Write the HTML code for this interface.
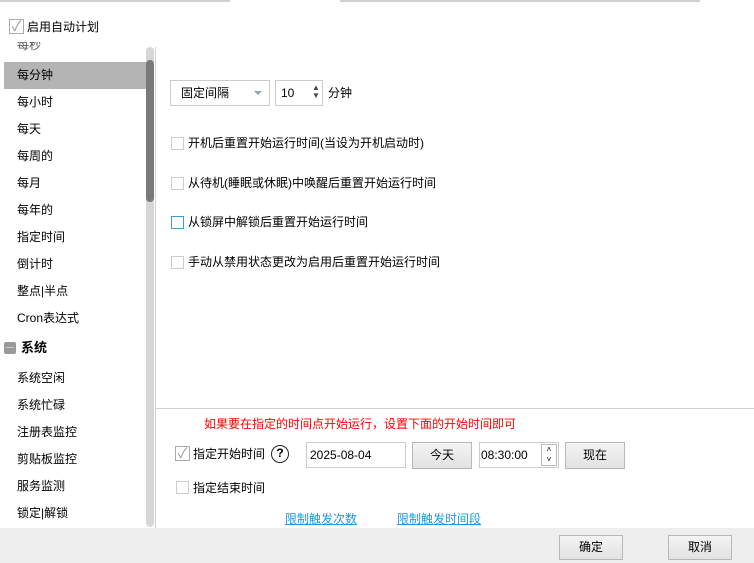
<!DOCTYPE html>
<html><head><meta charset="utf-8"><style>
*{margin:0;padding:0;box-sizing:border-box}
body{width:754px;height:563px;position:relative;background:#fff;font-family:"Liberation Sans","Noto Sans CJK SC",sans-serif;font-size:12px;color:#000;overflow:hidden}
.a{position:absolute}
.item{position:absolute;left:17px;font-size:12px;line-height:14px}
.cb{position:absolute;width:13px;height:13px;border:1px solid #ccc;background:#fff}
.t{position:absolute;font-size:12px;line-height:14px;white-space:nowrap}
.btn{position:absolute;border:1px solid #b8b8b8;background:linear-gradient(#f4f4f4,#e2e2e2);text-align:center;font-size:12px}
.inp{position:absolute;border:1px solid #ccc;background:#fff}
</style></head><body>
<div class="a" style="left:0;top:0;width:230px;height:2px;background:#d0d0d0"></div>
<div class="a" style="left:340px;top:0;width:360px;height:2px;background:#d0d0d0"></div>
<div class="cb" style="left:9px;top:19px;width:15px;height:15px;border-color:#aaa;color:#999;font-size:14px;line-height:13px;text-align:center">✓</div>
<div class="t" style="left:27px;top:20px">启用自动计划</div>
<div class="item" style="top:42px;color:#555;height:9px;overflow:hidden;line-height:6px">每秒</div>
<div class="a" style="left:4px;top:62px;width:142px;height:27px;background:#b4b4b4"></div>
<div class="item" style="top:68px">每分钟</div>
<div class="item" style="top:95px">每小时</div>
<div class="item" style="top:122px">每天</div>
<div class="item" style="top:149px">每周的</div>
<div class="item" style="top:176px">每月</div>
<div class="item" style="top:203px">每年的</div>
<div class="item" style="top:230px">指定时间</div>
<div class="item" style="top:257px">倒计时</div>
<div class="item" style="top:284px">整点|半点</div>
<div class="item" style="top:311px">Cron表达式</div>
<div class="a" style="left:4px;top:342px;width:12px;height:12px;background:#999;border-radius:2px"><div class="a" style="left:2px;top:5px;width:8px;height:1px;background:#ccc"></div></div>
<div class="t" style="left:21px;top:341px;font-weight:bold;font-size:13px">系统</div>
<div class="item" style="top:371px">系统空闲</div>
<div class="item" style="top:398px">系统忙碌</div>
<div class="item" style="top:425px">注册表监控</div>
<div class="item" style="top:452px">剪贴板监控</div>
<div class="item" style="top:479px">服务监测</div>
<div class="item" style="top:506px">锁定|解锁</div>
<div class="a" style="left:146px;top:47px;width:8px;height:480px;background:#d6d6d6;border-radius:4px"></div>
<div class="a" style="left:146px;top:60px;width:8px;height:142px;background:#7a7a7a;border-radius:4px"></div>
<div class="a" style="left:155px;top:47px;width:1px;height:481px;background:#d0d0d0"></div>
<div class="inp" style="left:170px;top:80px;width:100px;height:26px"></div>
<div class="t" style="left:181px;top:86px">固定间隔</div>
<div class="a" style="left:254px;top:91px;width:0;height:0;border-left:4px solid transparent;border-right:4px solid transparent;border-top:4px solid #8aa"></div>
<div class="inp" style="left:275px;top:80px;width:48px;height:26px"></div>
<div class="t" style="left:281px;top:86px">10</div>
<div class="a" style="left:312px;top:84px;font-size:8px;line-height:8px;color:#444">▲<br>▼</div>
<div class="t" style="left:328px;top:86px">分钟</div>
<div class="cb" style="left:171px;top:137px"></div><div class="t" style="left:188px;top:136px">开机后重置开始运行时间(当设为开机启动时)</div>
<div class="cb" style="left:171px;top:177px"></div><div class="t" style="left:188px;top:176px">从待机(睡眠或休眠)中唤醒后重置开始运行时间</div>
<div class="cb" style="left:171px;top:216px;border-color:#3c9ad8"></div><div class="t" style="left:188px;top:215px">从锁屏中解锁后重置开始运行时间</div>
<div class="cb" style="left:171px;top:256px"></div><div class="t" style="left:188px;top:255px">手动从禁用状态更改为启用后重置开始运行时间</div>
<div class="a" style="left:155px;top:408px;width:599px;height:1px;background:#d0d0d0"></div>
<div class="t" style="left:204px;top:417px;color:#f00">如果要在指定的时间点开始运行，设置下面的开始时间即可</div>
<div class="cb" style="left:175px;top:446px;width:15px;height:15px;border-color:#aaa;color:#999;font-size:14px;line-height:13px;text-align:center">✓</div>
<div class="t" style="left:193px;top:447px">指定开始时间</div>
<div class="a" style="left:271px;top:445px;width:18px;height:18px;border:1.5px solid #222;border-radius:50%;text-align:center;font-weight:bold;font-size:12px;line-height:15px">?</div>
<div class="inp" style="left:306px;top:442px;width:100px;height:26px"></div>
<div class="t" style="left:310px;top:448px">2025-08-04</div>
<div class="btn" style="left:412px;top:442px;width:60px;height:27px;line-height:25px">今天</div>
<div class="inp" style="left:479px;top:442px;width:80px;height:26px"></div>
<div class="t" style="left:481px;top:448px">08:30:00</div>
<div class="a" style="left:541px;top:444px;width:16px;height:22px;border:1px solid #bbb;font-size:8px;line-height:10px;text-align:center">˄<br>˅</div>
<div class="btn" style="left:565px;top:442px;width:60px;height:27px;line-height:25px">现在</div>
<div class="cb" style="left:176px;top:481px"></div>
<div class="t" style="left:193px;top:481px">指定结束时间</div>
<div class="t" style="left:285px;top:512px;color:#1a9be0;text-decoration:underline">限制触发次数</div>
<div class="t" style="left:397px;top:512px;color:#1a9be0;text-decoration:underline">限制触发时间段</div>
<div class="a" style="left:0;top:528px;width:754px;height:35px;background:#eeeeee"></div>
<div class="btn" style="left:559px;top:535px;width:64px;height:25px;line-height:23px">确定</div>
<div class="btn" style="left:668px;top:535px;width:64px;height:25px;line-height:23px">取消</div>
</body></html>
